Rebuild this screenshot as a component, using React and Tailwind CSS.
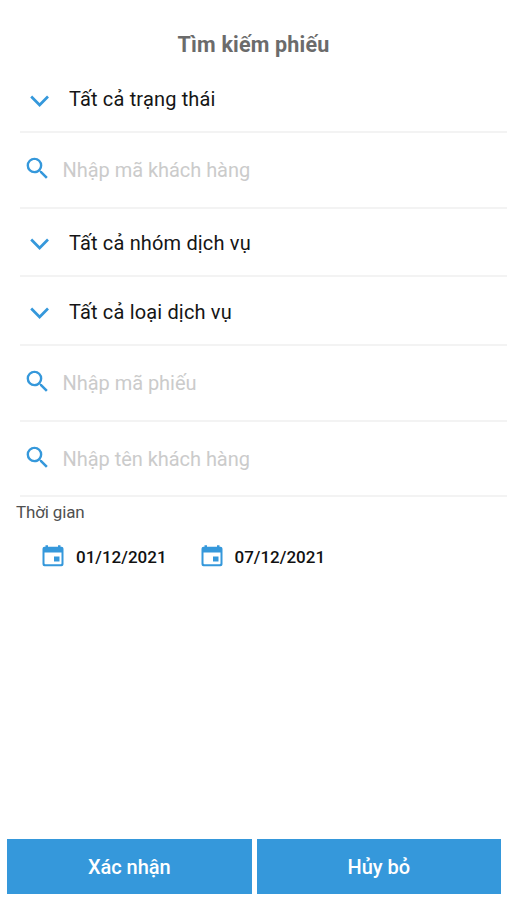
import { useState } from "react";
import { MdSearch } from "react-icons/md";

function ChevronIcon() {
  return (
    <svg
      className="w-5 h-3 shrink-0 mt-[3px]"
      viewBox="0 0 20 12"
      fill="none"
    >
      <path
        d="M1.2 1.5L9.6 10L18 1.5"
        stroke="#3598db"
        strokeWidth="2.7"
      />
    </svg>
  );
}

function CalendarIcon() {
  return (
    <svg
      className="w-[22px] h-[22px] shrink-0 mb-[2px]"
      viewBox="0 0 22 22"
    >
      <path
        fill="#3598db"
        fillRule="evenodd"
        d="M3.5 0.3h2.5v1.500h10v-1.500h2.500v1.500h1a2 2 0 0 1 2 2v15.500a2 2 0 0 1-2 2h-17a2 2 0 0 1-2-2v-15.500a2 2 0 0 1 2-2h1zM2.500 7.500v10.800a1 1 0 0 0 1 1h15a1 1 0 0 0 1-1v-10.800z"
      />
      <path fill="#3598db" d="M12 11.500h5.500v5h-5.500z" />
    </svg>
  );
}

function SelectRow({ label, className, labelClassName }) {
  return (
    <div
      className={`ml-5 pl-[10px] flex items-center border-b-2 border-[#f3f3f3] ${className}`}
    >
      <ChevronIcon />
      <span
        className={`ml-[19px] overflow-hidden text-[20px] tracking-[0.16px] text-[#151515] ${labelClassName}`}
      >
        {label}
      </span>
    </div>
  );
}

function SearchRow({ id, placeholder, className, value, onChange }) {
  return (
    <div
      className={`ml-5 pl-[3px] flex items-center border-b-2 border-[#f3f3f3] ${className}`}
    >
      <MdSearch className="w-[29px] h-[29px] shrink-0 text-[#3598db] mb-[3px]" />
      <input
        type="text"
        id={id}
        value={value}
        onChange={onChange}
        placeholder={placeholder}
        className="ml-[10.500px] w-full text-[20px] tracking-[-0.04px] outline-none placeholder:text-[#cbcbcb]"
      />
    </div>
  );
}

export default function App() {
  const [formData, setFormData] = useState({});

  const handleChange = (e) => {
    setFormData({ ...formData, [e.target.id]: e.target.value });
  };

  return (
    <div className="w-full h-screen bg-white flex flex-col overflow-hidden font-['Roboto',sans-serif]">
      <h1 className="pt-[29px] h-[67px] leading-[32px] text-center text-[21.500px] tracking-[0.18px] font-bold text-[#6b6b6b]">
        Tìm kiếm phiếu
      </h1>
      <SelectRow
        label="Tất cả trạng thái"
        className="h-[66px]"
        labelClassName="h-[24px] leading-[26px] mb-[3px]"
      />
      <SearchRow
        id="customerCode"
        placeholder="Nhập mã khách hàng"
        className="h-[76px]"
        value={formData.customerCode || ""}
        onChange={handleChange}
      />
      <SelectRow
        label="Tất cả nhóm dịch vụ"
        className="h-[68px] pt-px"
        labelClassName="h-[28px] leading-[29px]"
      />
      <SelectRow
        label="Tất cả loại dịch vụ"
        className="h-[69px] pt-[2px]"
        labelClassName="h-[28px] leading-[28px]"
      />
      <SearchRow
        id="ticketCode"
        placeholder="Nhập mã phiếu"
        className="h-[76px]"
        value={formData.ticketCode || ""}
        onChange={handleChange}
      />
      <SearchRow
        id="customerName"
        placeholder="Nhập tên khách hàng"
        className="h-[75px] pt-px"
        value={formData.customerName || ""}
        onChange={handleChange}
      />
      <p className="ml-4 mt-[3px] leading-[24px] text-[17px] tracking-[-0.15px] text-[#505050]">
        Thời gian
      </p>
      <div className="ml-[42px] mt-5 flex items-center">
        <div className="w-[158.500px] flex items-center gap-3">
          <CalendarIcon />
          <span className="mt-px text-[17px] font-medium text-[#111]">
            01/12/2021
          </span>
        </div>
        <div className="flex items-center gap-3">
          <CalendarIcon />
          <span className="mt-px text-[17px] font-medium text-[#111]">
            07/12/2021
          </span>
        </div>
      </div>
      <div className="mt-auto mb-[6px] ml-[7px] mr-[6px] flex gap-[5px]">
        <button className="flex-1 h-[55px] bg-[#3598db] text-white text-[20px] tracking-[-0.05px] font-medium">
          Xác nhận
        </button>
        <button className="flex-1 h-[55px] bg-[#3598db] text-white text-[20px] tracking-[-0.05px] font-medium">
          Hủy bỏ
        </button>
      </div>
    </div>
  );
}
